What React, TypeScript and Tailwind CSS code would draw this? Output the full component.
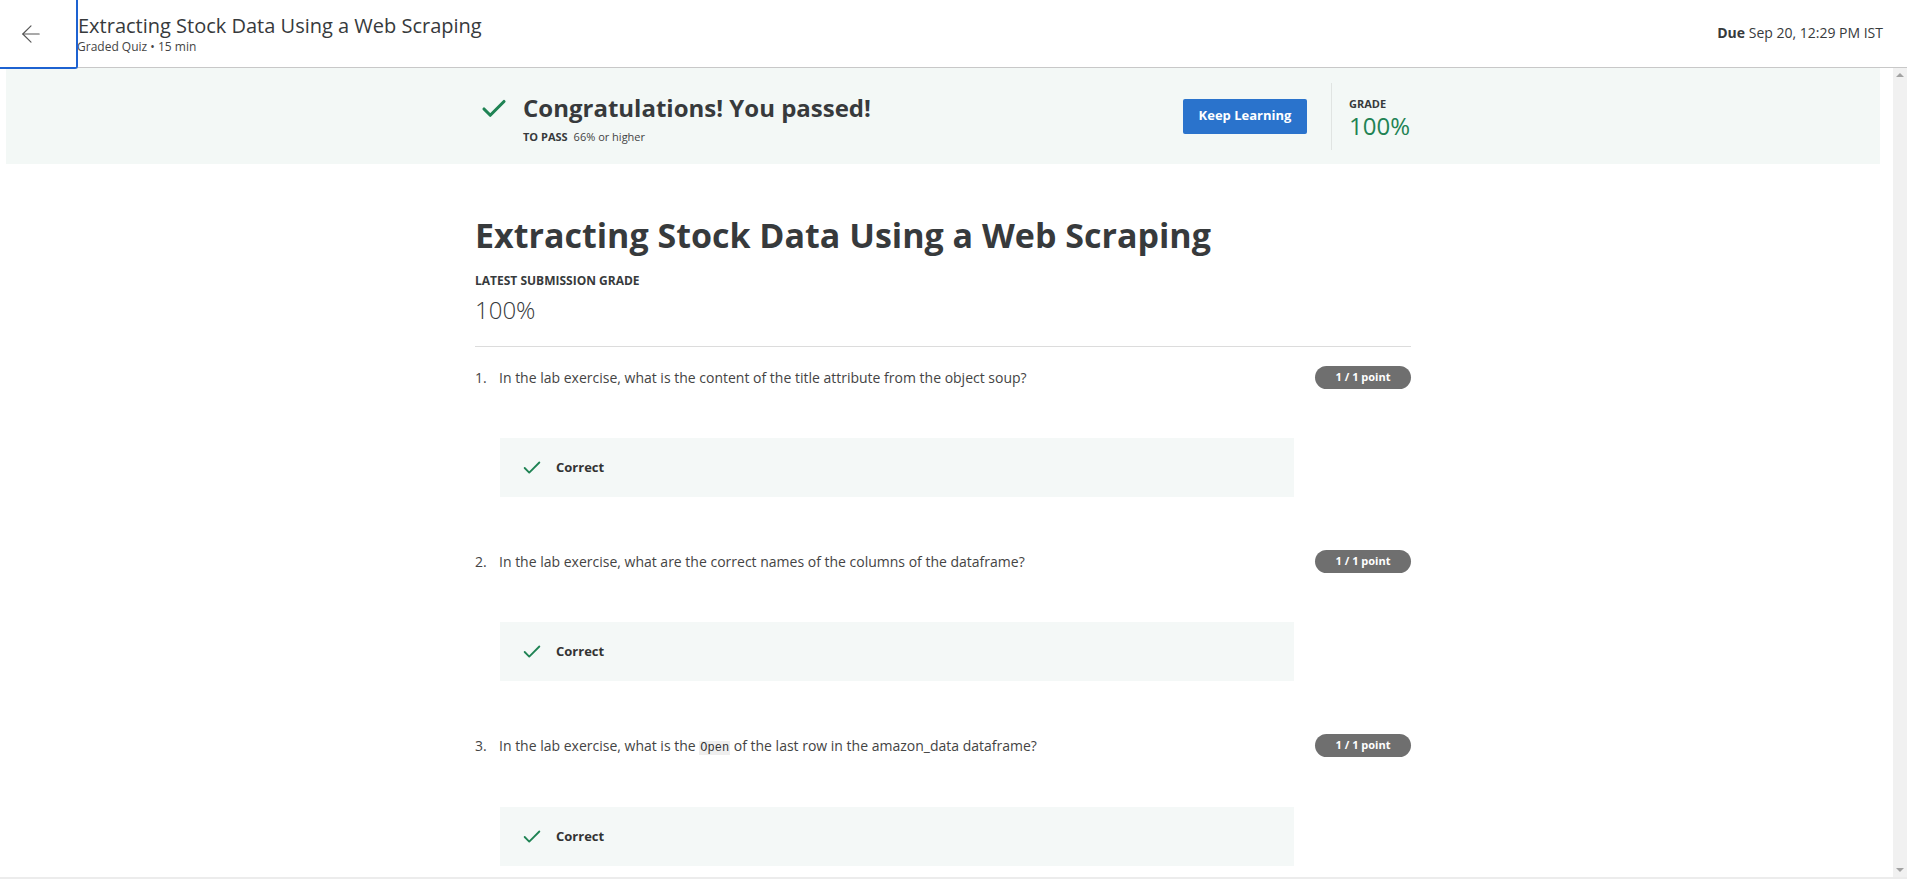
import React from "react";
import { ArrowLeft, Check } from "lucide-react";

interface Question {
  id: number;
  text: React.ReactNode;
}

const questions: Question[] = [
  {
    id: 1,
    text: "In the lab exercise, what is the content of the title attribute from the object soup?",
  },
  {
    id: 2,
    text: "In the lab exercise, what are the correct names of the columns of the dataframe?",
  },
  {
    id: 3,
    text: (
      <>
        In the lab exercise, what is the{" "}
        <code className="font-['Liberation_Mono',monospace] text-[12px] text-[#333] bg-[#efefef] px-[1px]">Open</code>{" "}
        of the last row in the amazon_data dataframe?
      </>
    ),
  },
];

const QuestionBlock: React.FC<{ q: Question }> = ({ q }) => (
  <div className="mb-[55px]">
    <div className="flex items-start">
      <span className="w-[24px] text-[14px] leading-[20px] text-[#444]">{q.id}.</span>
      <p className="flex-1 text-[14px] leading-[20px] text-[#444]">{q.text}</p>
      <span className="h-[23px] w-[96px] rounded-full bg-[#6f6f6f] text-white text-[11px] font-bold flex items-center justify-center -mt-[2px]">
        1 / 1 point
      </span>
    </div>
    <div className="ml-[25px] mt-[49px] w-[794px] h-[59px] bg-[#f4f8f7] flex items-center pl-[21px]">
      <Check className="w-[22px] h-[22px] text-[#1f8354]" strokeWidth={2} />
      <span className="ml-[13px] text-[13px] font-bold text-[#333]">Correct</span>
    </div>
  </div>
);

export default function App() {
  return (
    <div className="h-[879px] w-full overflow-hidden bg-white flex flex-col font-['Open_Sans',sans-serif] text-[#373a3c]">
      <header className="h-[68px] shrink-0 flex border-b border-[#c8c8c8]">
        <button className="w-[78px] h-[69px] shrink-0 border-r-2 border-b-2 border-[#1d62d1] rounded-br-[3px] flex items-center pl-[17px] bg-white z-10">
          <ArrowLeft className="w-[28px] h-[28px] text-[#555]" strokeWidth={1} />
        </button>
        <div className="flex-1 pt-[12px]">
          <h1 className="text-[20px] leading-[27px] text-[#373a3c]">Extracting Stock Data Using a Web Scraping</h1>
          <p className="text-[12px] leading-[15px] text-[#444] -ml-[1px]">Graded Quiz • 15 min</p>
        </div>
        <div className="pr-[24px] pt-[22px] text-[14px] text-[#373a3c]">
          <span className="font-bold">Due</span> Sep 20, 12:29 PM IST
        </div>
      </header>

      <div className="flex-1 flex min-h-0">
        <main className="flex-1 pl-[6px] pr-[13px]">
          <section className="h-[96px] bg-[#f3f8f6] flex justify-center">
            <div className="w-[936px] flex items-center">
              <div className="flex-1 flex items-start pl-[4px] pt-[4px]">
                <Check className="w-[30px] h-[30px] text-[#1f8354] mt-[2px]" strokeWidth={2.5} />
                <div className="ml-[14px]">
                  <h2 className="text-[24px] leading-[32px] font-bold text-[#373a3c]">Congratulations! You passed!</h2>
                  <p className="text-[11px] leading-[16px] mt-[5px]">
                    <span className="font-bold">TO PASS</span>
                    <span className="ml-[6px] text-[#444]">66% or higher</span>
                  </p>
                </div>
              </div>
              <button className="w-[124px] h-[35px] rounded-[2px] bg-[#2a73cc] text-white text-[13px] font-bold">
                Keep Learning
              </button>
              <div className="ml-[24px] w-px h-[67px] bg-[#e0e4e2]" />
              <div className="pl-[17px] w-[79px] pt-[5px]">
                <div className="text-[11px] font-bold leading-[14px] text-[#373a3c]">GRADE</div>
                <div className="text-[24px] leading-[30px] text-[#1f8354]">100%</div>
              </div>
            </div>
          </section>

          <div className="w-[936px] mx-auto">
            <h1 className="mt-[50px] text-[34px] leading-[42px] font-bold text-[#373a3c]">
              Extracting Stock Data Using a Web Scraping
            </h1>
            <div className="mt-[17px] text-[12px] leading-[16px] font-bold">LATEST SUBMISSION GRADE</div>
            <div className="mt-[5px] text-[24px] leading-[32px] font-light text-[#373a3c]">100%</div>
            <div className="mt-[20px] h-px bg-[#dcdcdc]" />
            <div className="pt-[21px]">
              {questions.map((q) => (
                <QuestionBlock key={q.id} q={q} />
              ))}
            </div>
          </div>
        </main>

        <div className="w-[14px] shrink-0 bg-[#f1f1f1] flex flex-col justify-between items-center py-[5px]">
          <span className="w-0 h-0 border-l-[4px] border-r-[4px] border-b-[4px] border-l-transparent border-r-transparent border-b-[#a3a3a3]" />
          <span className="w-0 h-0 border-l-[4px] border-r-[4px] border-t-[4px] border-l-transparent border-r-transparent border-t-[#a3a3a3]" />
        </div>
      </div>
      <div className="h-[2px] shrink-0 bg-[#ececec]" />
    </div>
  );
}
